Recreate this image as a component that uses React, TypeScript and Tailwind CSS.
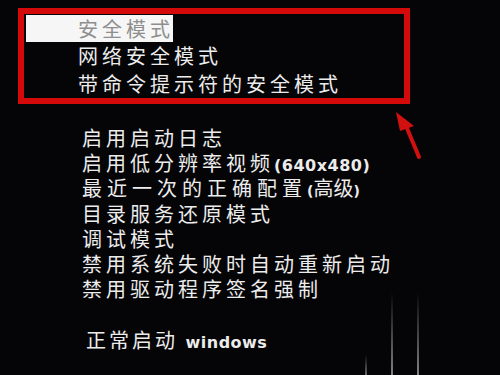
const cjk = "font-['Noto_Sans_CJK_SC',sans-serif]";

// Latin part of a boot menu line: wider, bold and without the CJK spacing
const Latin = ({ children }: { children: string }) => (
  <span className="font-['DejaVu_Sans',sans-serif] text-[16px] font-bold tracking-[0.5px] leading-none">
    {children}
  </span>
);

const Paren = ({ children }: { children: string }) => (
  <span className="font-['DejaVu_Sans',sans-serif] text-[14px] font-bold leading-none">{children}</span>
);

const safeModes = ["网络安全模式", "带命令提示符的安全模式"];

const Row = ({ children, className = "" }: { children: React.ReactNode; className?: string }) => (
  <div className={`h-[25.2px] leading-[25.2px] whitespace-nowrap ${className}`}>{children}</div>
);

const App = () => {
  return (
    <div
      className={`relative w-[500px] h-[375px] overflow-hidden bg-[#050507] text-[#ececec] text-[20px] tracking-[4px] ${cjk}`}
    >
      {/* Highlighted safe mode group */}
      <div className="ml-[18px] mt-[8px] w-[392px] h-[96px] border-[6px] border-[#d40a0a] pt-px">
        <div className="ml-[2px] w-[147px] h-[27px] leading-[27px] bg-[#f6f6f6] pl-[52px] text-[#8e8e8e] whitespace-nowrap">
          安全模式
        </div>
        {safeModes.map((item) => (
          <div key={item} className="h-[28px] leading-[28px] pl-[54px] whitespace-nowrap">
            {item}
          </div>
        ))}
      </div>

      {/* Advanced options */}
      <div className="mt-[21px] pl-[82px]">
        <Row>启用启动日志</Row>
        <Row>
          启用低分辨率视频<Latin>(640x480)</Latin>
        </Row>
        <Row className="tracking-[5px]">
          最近一次的正确配置
          <span className="tracking-normal">
            <Paren>(</Paren>高级<Paren>)</Paren>
          </span>
        </Row>
        <Row>目录服务还原模式</Row>
        <Row>调试模式</Row>
        <Row>禁用系统失败时自动重新启动</Row>
        <Row>禁用驱动程序签名强制</Row>
      </div>

      <div className="mt-[26px] pl-[86px]">
        <Row className="tracking-[3px]">
          正常启动 <Latin>windows</Latin>
        </Row>
      </div>

      {/* Arrow pointing at the box */}
      <svg className="absolute left-0 top-0" width="500" height="375">
        <line x1="404" y1="121" x2="419" y2="157" stroke="#d21010" strokeWidth="4" strokeLinecap="round" />
        <polygon points="396,112 414,126 400,131" fill="#d21010" />
      </svg>

      {/* Light streaks from the photo */}
      <div className="absolute left-[391px] top-[292px] w-[2px] h-[83px] bg-linear-to-b from-transparent to-white/50" />
      <div className="absolute left-[417px] top-[292px] w-[2px] h-[83px] bg-linear-to-b from-transparent to-white/50" />
      <div className="absolute left-[365px] top-[355px] w-[2px] h-[20px] bg-linear-to-b from-transparent to-white/40" />
    </div>
  );
};

export default App;
